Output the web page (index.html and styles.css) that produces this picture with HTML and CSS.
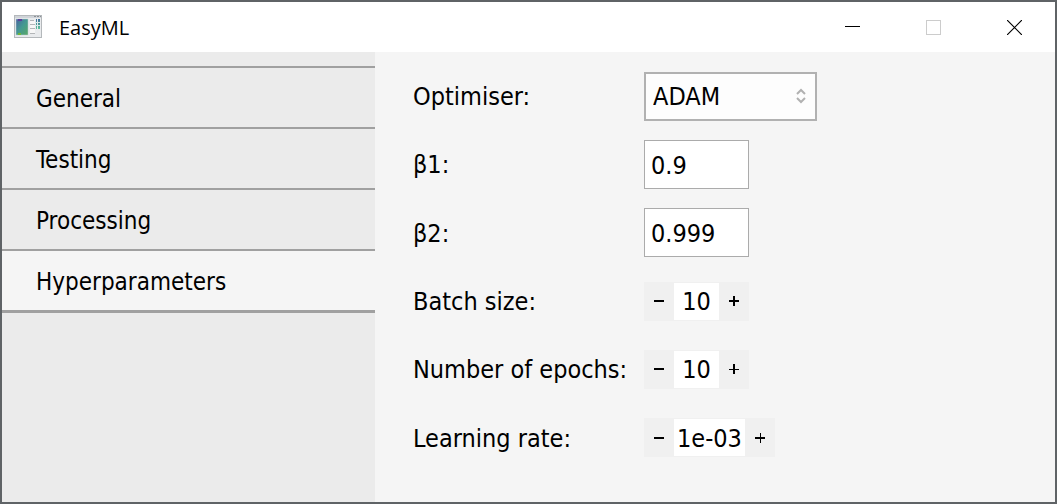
FILE: index.html
```html
<!DOCTYPE html>
<html lang="en">
<head>
<meta charset="utf-8">
<meta name="viewport" content="width=device-width, initial-scale=1">
<title>EasyML</title>
<link rel="stylesheet" href="styles.css">
</head>
<body>
<div class="window">
  <header class="titlebar">
    <svg class="app-icon" width="28" height="24" viewBox="0 0 28 24" aria-hidden="true">
      <defs>
        <linearGradient id="pane" x1="0" y1="0" x2="1" y2="1">
          <stop offset="0" stop-color="#4663a0"/>
          <stop offset="0.5" stop-color="#459a91"/>
          <stop offset="1" stop-color="#59a866"/>
        </linearGradient>
        <linearGradient id="strip" x1="0" y1="0" x2="0" y2="1">
          <stop offset="0" stop-color="#3f6f9c"/>
          <stop offset="1" stop-color="#5cc49a"/>
        </linearGradient>
      </defs>
      <rect x="0.5" y="0.5" width="27" height="22" fill="#e9ebed" stroke="#b4b8bb"/>
      <rect x="1" y="1" width="26" height="2" fill="#cfd3d8"/>
      <path d="M20 1.5h2M23 1.5h2M26 1.5h1" stroke="#8b9095"/>
      <rect x="2" y="4" width="12" height="16" fill="url(#pane)" stroke="#c3ced2" stroke-width="0.5"/>
      <path d="M4 5h4" stroke="#5a3f98" stroke-width="2"/>
      <path d="M4 19h3" stroke="#70b53c" stroke-width="2"/>
      <path d="M16 5h5v13h-5z" fill="#f7f7f7"/>
      <path d="M16 5.5h4M16 9.5h5M16 13.5h5M16 18.5h5" stroke="#b3b6b8"/>
      <path d="M22 4h1v10h-1zM24 4h2v10h-2z" fill="url(#strip)"/>
      <path d="M21 7.5h5M21 10.5h5" stroke="#d8ebe8"/>
    </svg>
    <h1 class="title">EasyML</h1>
    <div class="window-buttons">
      <button class="window-button" type="button" aria-label="Minimise">
        <svg width="15" height="15" viewBox="0 0 15 15"><path d="M0 6.5h15" stroke="#000"/></svg>
      </button>
      <button class="window-button" type="button" aria-label="Maximise" disabled>
        <svg width="15" height="15" viewBox="0 0 15 15"><rect x="0.5" y="0.5" width="14" height="14" fill="none" stroke="#ccc"/></svg>
      </button>
      <button class="window-button" type="button" aria-label="Close">
        <svg width="15" height="15" viewBox="0 0 15 15"><path d="M0 0l15 15M15 0L0 15" stroke="#000" stroke-width="1.2"/></svg>
      </button>
    </div>
  </header>
  <div class="content">
    <nav class="sidebar">
      <button class="tab" type="button">General</button>
      <button class="tab" type="button">Testing</button>
      <button class="tab" type="button">Processing</button>
      <button class="tab tab-active" type="button" aria-current="page">Hyperparameters</button>
    </nav>
    <form class="form">
      <label for="optimiser">Optimiser:</label>
      <div class="select-wrap">
        <select class="select" id="optimiser"><option>ADAM</option></select>
        <svg class="select-arrows" width="10" height="16" viewBox="0 0 10 16" aria-hidden="true"><path d="M1 6l4-4 4 4M1 10l4 4 4-4" fill="none" stroke="#b1b1b1" stroke-width="2"/></svg>
      </div>
      <label for="beta1">β1:</label>
      <input class="field" id="beta1" type="text" value="0.9">
      <label for="beta2">β2:</label>
      <input class="field" id="beta2" type="text" value="0.999">
      <label for="batch">Batch size:</label>
      <div class="stepper">
        <button class="step" type="button" aria-label="Decrease batch size"><svg width="10" height="10" viewBox="0 0 10 10"><path d="M0 5h10" stroke="#000" stroke-width="2"/></svg></button>
        <input class="value" id="batch" type="text" value="10">
        <button class="step" type="button" aria-label="Increase batch size"><svg width="10" height="10" viewBox="0 0 10 10"><path d="M0 5h10M5 0v10" stroke="#000" stroke-width="2"/></svg></button>
      </div>
      <label for="epochs">Number of epochs:</label>
      <div class="stepper">
        <button class="step" type="button" aria-label="Decrease epochs"><svg width="10" height="10" viewBox="0 0 10 10"><path d="M0 5h10" stroke="#000" stroke-width="2"/></svg></button>
        <input class="value" id="epochs" type="text" value="10">
        <button class="step" type="button" aria-label="Increase epochs"><svg width="10" height="10" viewBox="0 0 10 10"><path d="M0 5.5h10" stroke="#000"/><path d="M5 0v10" stroke="#000" stroke-width="2"/></svg></button>
      </div>
      <label for="rate">Learning rate:</label>
      <div class="stepper">
        <button class="step" type="button" aria-label="Decrease learning rate"><svg width="10" height="10" viewBox="0 0 10 10"><path d="M0 5h10" stroke="#000" stroke-width="2"/></svg></button>
        <input class="value value-wide" id="rate" type="text" value="1e-03">
        <button class="step" type="button" aria-label="Increase learning rate"><svg width="10" height="10" viewBox="0 0 10 10"><path d="M0 5h10" stroke="#000" stroke-width="2"/><path d="M5.5 0v10" stroke="#000"/></svg></button>
      </div>
    </form>
  </div>
</div>
</body>
</html>
```
FILE: styles.css
```css
* {
  box-sizing: border-box;
}

body {
  margin: 0;
  color: #000;
  font: 24px/32px Tahoma, "DejaVu Sans Condensed", "Noto Sans", sans-serif;
}

button,
input,
select {
  margin: 0;
  padding: 0;
  border: 0;
  border-radius: 0;
  color: inherit;
  font: inherit;
}

.window {
  display: flex;
  flex-direction: column;
  min-height: 100vh;
  border: 2px solid #5f6366;
  background: #f5f5f5;
}

.titlebar {
  display: flex;
  align-items: center;
  height: 50px;
  padding-left: 12px;
  background: #fff;
}

.app-icon {
  margin-right: 17px;
}

.title {
  margin: 0;
  padding-top: 2px;
  font: 20px/28px "Segoe UI", "Open Sans", sans-serif;
}

.window-buttons {
  display: flex;
  height: 100%;
  margin-left: auto;
}

.window-button {
  display: grid;
  place-items: center;
  width: 81px;
  background: transparent;
}

.content {
  display: grid;
  flex: 1;
  grid-template-columns: 373px 1fr;
}

.sidebar {
  display: flex;
  flex-direction: column;
  padding-top: 14px;
  background: #ebebeb;
}

.tab {
  height: 61px;
  padding: 2px 0 0 34px;
  border-top: 2px solid #a0a0a0;
  background: transparent;
  text-align: left;
}

.tab-active {
  height: 64px;
  border-bottom: 3px solid #a0a0a0;
  background: #f5f5f5;
}

.form {
  display: grid;
  grid-template-columns: 231px 1fr;
  grid-auto-rows: 1fr;
  align-items: center;
  justify-items: start;
  padding: 10px 38px 30px;
  font-size: 25px;
}

.form label {
  padding-top: 2px;
}

.select-wrap {
  display: grid;
  align-items: center;
  width: 173px;
}

.select,
.select-arrows {
  grid-area: 1 / 1;
}

.select {
  appearance: none;
  width: 100%;
  height: 49px;
  padding: 2px 0 0 7px;
  border: 2px solid #b1b1b1;
  background: #fdfdfd;
}

.select-arrows {
  justify-self: end;
  margin-right: 11px;
  pointer-events: none;
}

.field {
  width: 105px;
  height: 49px;
  padding: 2px 0 0 6px;
  border: 1px solid #ababab;
  background: #fff;
}

.stepper {
  display: flex;
  height: 39px;
  border: solid #f0f0f0;
  border-width: 1px 0;
}

.step {
  display: grid;
  place-items: center;
  width: 30px;
  background: #f0f0f0;
}

.value {
  width: 45px;
  padding-top: 2px;
  background: #fff;
  text-align: center;
}

.value-wide {
  width: 71px;
}
```
